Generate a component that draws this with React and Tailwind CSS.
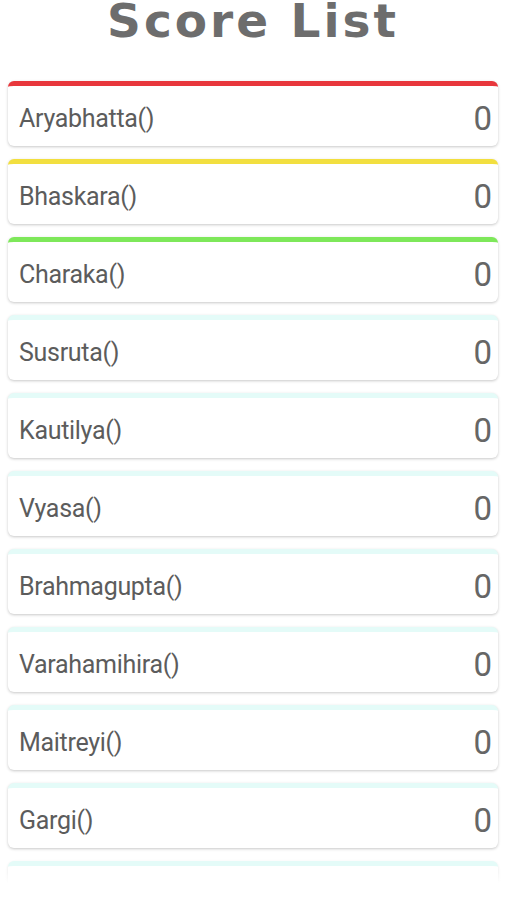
const players = [
  { name: "Aryabhatta()", score: 0, bar: "border-t-[#e8373c]" },
  { name: "Bhaskara()", score: 0, bar: "border-t-[#f2df3f]" },
  { name: "Charaka()", score: 0, bar: "border-t-[#7ee85a]" },
  { name: "Susruta()", score: 0, bar: "border-t-[#e4fbf8]" },
  { name: "Kautilya()", score: 0, bar: "border-t-[#e4fbf8]" },
  { name: "Vyasa()", score: 0, bar: "border-t-[#e4fbf8]" },
  { name: "Brahmagupta()", score: 0, bar: "border-t-[#e4fbf8]" },
  { name: "Varahamihira()", score: 0, bar: "border-t-[#e4fbf8]" },
  { name: "Maitreyi()", score: 0, bar: "border-t-[#e4fbf8]" },
  { name: "Gargi()", score: 0, bar: "border-t-[#e4fbf8]" },
];

function ScoreRow({ name, score, bar }) {
  return (
    <div className={`h-[65px] shrink-0 flex items-center justify-between bg-white rounded-md border-t-[5px] ${bar} shadow-[0_1px_3px_rgba(0,0,0,0.22)] pl-[11px] pr-[6px] pt-[5px]`}>
      <p className="text-[25px] text-[#5c5c5c] tracking-[-0.3px]">{name}</p>
      <p className="text-[33px] text-[#666666] leading-none">{score}</p>
    </div>
  );
}

export default function App() {
  return (
    <div className="w-[506px] h-[900px] bg-white overflow-hidden font-['Roboto',sans-serif]">
      <h1 className="h-[75px] text-center text-[47px] leading-[42px] font-bold text-[#6d6d6d] tracking-[3px] font-['DejaVu_Sans',sans-serif]">
        Score List
      </h1>
      <div className="relative h-[825px] overflow-hidden">
        <div className="flex flex-col gap-[13px] px-[8px] pt-[6px]">
          {players.map(p => (
            <ScoreRow key={p.name} {...p} />
          ))}
          {/* next row, scrolled mostly out of view */}
          <div className="h-[65px] shrink-0 bg-white rounded-md border-t-[5px] border-t-[#e4fbf8] shadow-[0_1px_3px_rgba(0,0,0,0.1)]" />
        </div>
        <div className="absolute left-0 right-0 top-[797px] bottom-0 bg-gradient-to-b from-white/0 to-white to-[40%]" />
      </div>
    </div>
  );
}
